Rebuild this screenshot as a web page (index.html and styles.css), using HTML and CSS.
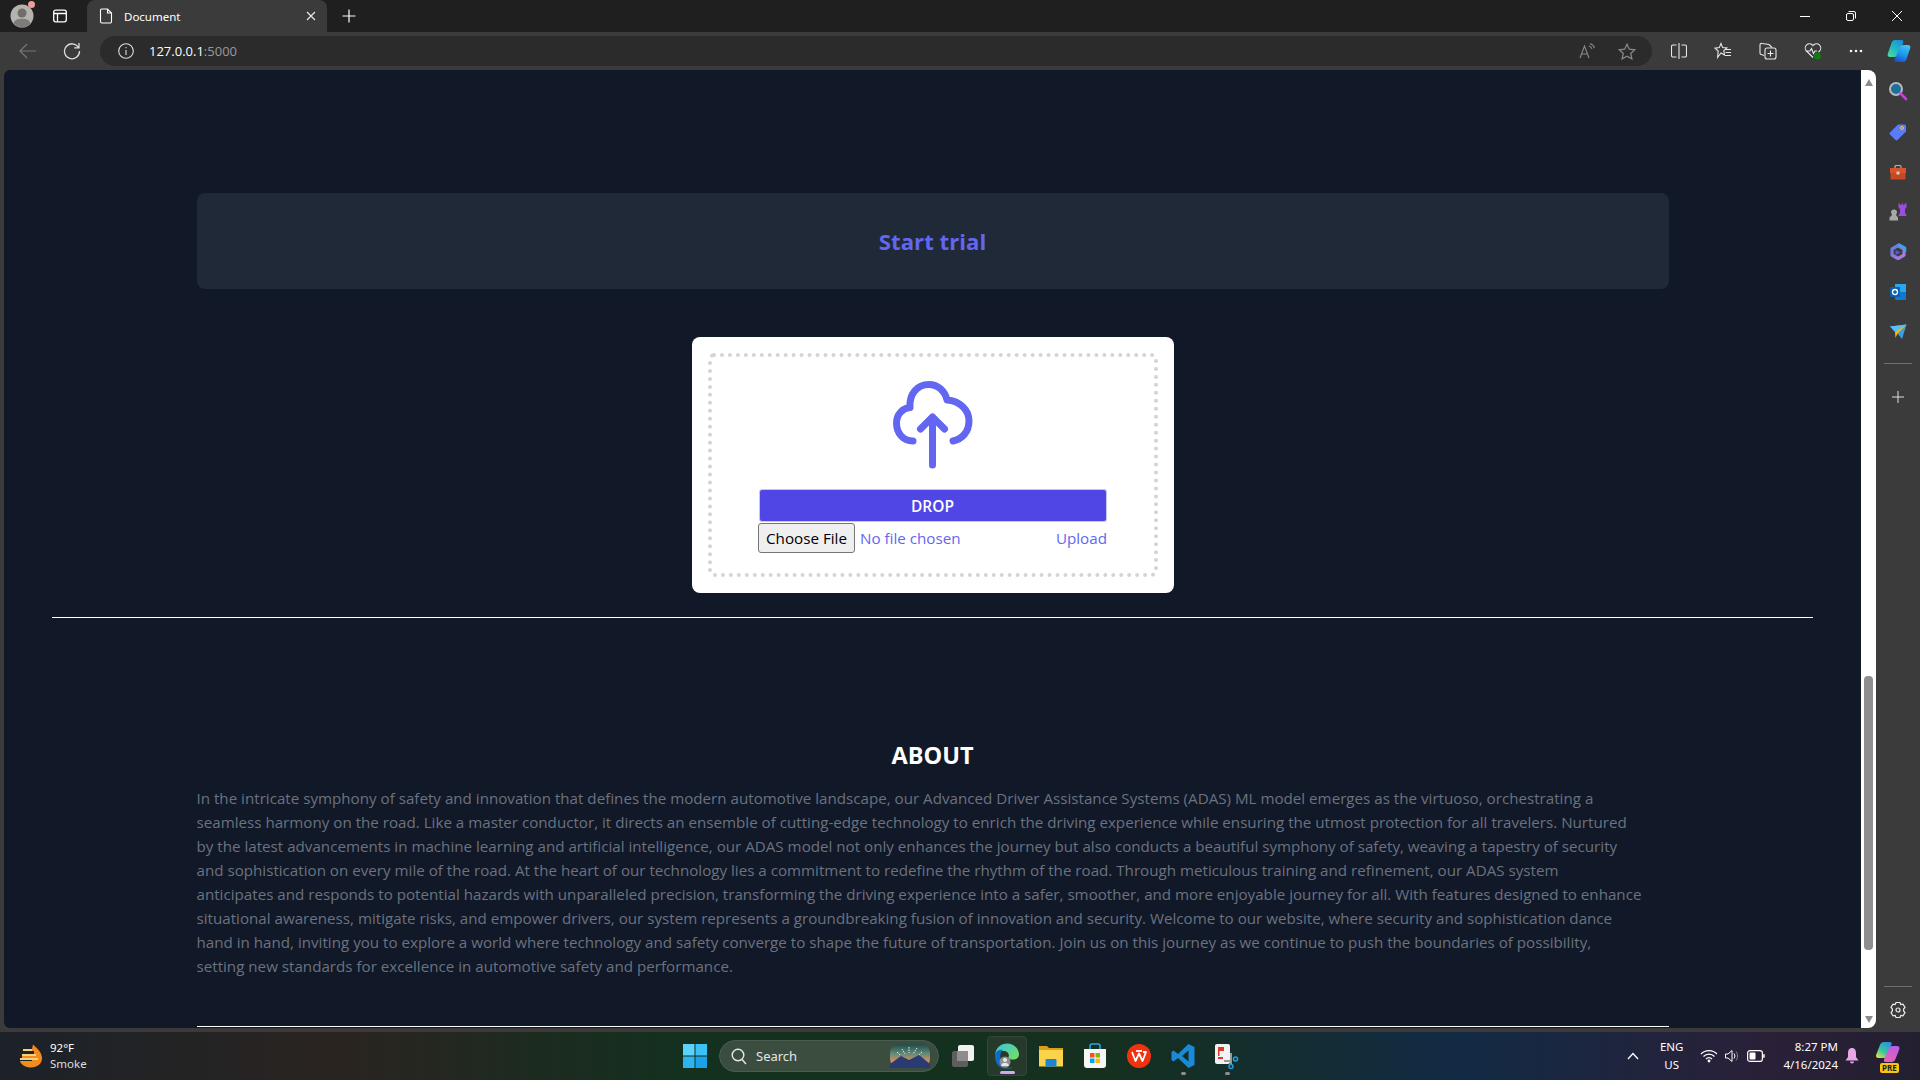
FILE: index.html
```html
<!DOCTYPE html>
<html lang="en">
<head>
    <meta charset="UTF-8">
    <meta name="viewport" content="width=device-width, initial-scale=1.0">
    <title>Document</title>
    <link rel="stylesheet" href="styles.css">
</head>
<body>
    <!-- tab strip -->
    <div class="tabstrip">
        <div class="avatar">
            <svg width="24" height="24" viewBox="0 0 24 24"><circle cx="12" cy="12" r="11.5" fill="#b5b3ae"/><circle cx="12" cy="9" r="4.5" fill="#6f6e6b"/><path d="M3.5 19.5C5 15.5 8 14.8 12 14.8s7 .7 8.500 4.700A11.500 11.500 0 0 1 3.500 19.500z" fill="#7d7c79"/></svg>
            <span class="avatar-dot"></span>
        </div>
        <svg class="workspaces" width="16" height="16" viewBox="0 0 16 16" fill="none" stroke="#fff" stroke-width="1.300"><rect x="1.700" y="2.200" width="12.600" height="11.600" rx="2"/><path d="M5.500 5.500V13.500M2 5.500H14"/></svg>
        <div class="tab">
            <svg width="14" height="16" viewBox="0 0 14 16" fill="none" stroke="#fff" stroke-width="1.100"><path d="M2.500 1H8.500L12.500 5V13.500A1.500 1.500 0 0 1 11 15H3A1.500 1.500 0 0 1 1.500 13.500V2A1 1 0 0 1 2.500 1zM8.500 1V5H12.500"/></svg>
            <span class="tab-title">Document</span>
            <svg class="tab-close" width="10" height="10" viewBox="0 0 10 10" stroke="#e6e6e6" stroke-width="1.200"><path d="M1 1L9 9M9 1L1 9"/></svg>
        </div>
        <svg class="newtab" width="14" height="14" viewBox="0 0 14 14" stroke="#fff" stroke-width="1.200"><path d="M7 0.500V13.500M0.500 7H13.500"/></svg>
        <div class="winctl">
            <svg width="10" height="10" viewBox="0 0 10 10" stroke="#fff" stroke-width="1"><path d="M0 5.500H10"/></svg>
            <svg width="10" height="10" viewBox="0 0 10 10" fill="none" stroke="#fff" stroke-width="1"><rect x="0.500" y="2.500" width="7" height="7" rx="1.500"/><path d="M2.500 0.500H8A1.500 1.500 0 0 1 9.500 2V7.500"/></svg>
            <svg width="10" height="10" viewBox="0 0 10 10" stroke="#fff" stroke-width="1"><path d="M0 0L10 10M10 0L0 10"/></svg>
        </div>
    </div>

    <!-- toolbar -->
    <div class="toolbar">
        <svg class="tool-back" width="18" height="16" viewBox="0 0 18 16" fill="none" stroke="#777" stroke-width="1.200"><path d="M17 8H1M8 1L1 8L8 15"/></svg>
        <svg class="tool-reload" width="18" height="18" viewBox="0 0 18 18" fill="none" stroke="#ddd" stroke-width="1.300"><path d="M15.500 5.500A7.500 7.500 0 1 0 16.500 9M16 1V5.800H11.200"/></svg>
        <div class="address">
            <svg width="16" height="16" viewBox="0 0 16 16" fill="none" stroke="#ddd" stroke-width="1.100"><circle cx="8" cy="8" r="7.300"/><path d="M8 7V12M8 4V5.300"/></svg>
            <span class="url">127.0.0.1<span class="url-port">:5000</span></span>
            <svg class="addr-read" width="16" height="16" viewBox="0 0 16 16" fill="none" stroke="#8a8a8a" stroke-width="1.100"><path d="M1 15L5.500 3L10 15M2.500 11H8.500M10 3A4 4 0 0 1 13 6M11 .8A6 6 0 0 1 15.500 5"/></svg>
            <svg width="18" height="17" viewBox="0 0 18 17" fill="none" stroke="#8a8a8a" stroke-width="1.200"><path d="M9 1.200L11.300 6.200L16.800 6.800L12.700 10.500L13.900 15.900L9 13.200L4.100 15.900L5.300 10.500L1.200 6.800L6.700 6.200z"/></svg>
        </div>
        <div class="tool-group">
            <svg width="16" height="16" viewBox="0 0 16 16" fill="none" stroke="#e8e8e8" stroke-width="1.100"><path d="M5.500 2H2A1.500 1.500 0 0 0 .5 3.500V12.500A1.500 1.500 0 0 0 2 14H5.500M10.500 2H14A1.500 1.500 0 0 1 15.500 3.500V12.500A1.500 1.500 0 0 1 14 14H10.500M8 0V16"/></svg>
            <svg width="18" height="18" viewBox="0 0 18 18" fill="none" stroke="#e8e8e8" stroke-width="1.100"><path d="M7 1.500L8.700 5.600L12.800 6L9.800 8.800L10.500 13L7 11L3.600 15.500L4.200 9L1 6.200L5.300 5.600zM12 7.500H17M11.500 10.500H17M11 13.500H17"/></svg>
            <svg width="18" height="18" viewBox="0 0 18 18" fill="none" stroke="#e8e8e8" stroke-width="1.100"><path d="M5 13.500L2.500 12.500A1.500 1.500 0 0 1 1 11V3A1.500 1.500 0 0 1 3 1.500L10 2.500L13 5.500"/><rect x="6" y="6" width="11" height="11" rx="2"/><path d="M11.500 8.500V14.500M8.500 11.500H14.500"/></svg>
            <svg width="18" height="18" viewBox="0 0 18 18" fill="none"><path d="M9 15.500L2.500 9A4.200 4.200 0 0 1 8.400 3L9 3.700L9.600 3A4.200 4.200 0 0 1 15.500 9L14.500 10M1.500 9H6L7.500 6.500L9.500 11.500L11 9H13" stroke="#e8e8e8" stroke-width="1.100"/><circle cx="13.500" cy="14" r="3.500" fill="#107c10"/></svg>
            <svg width="14" height="4" viewBox="0 0 14 4" fill="#f0f0f0"><circle cx="2" cy="2" r="1.300"/><circle cx="7" cy="2" r="1.300"/><circle cx="12" cy="2" r="1.300"/></svg>
            <svg class="tool-copilot" width="24" height="24" viewBox="0 0 24 24"><defs><linearGradient id="cp1" x1="0.800" y1="0" x2="0.100" y2="1"><stop offset="0" stop-color="#1a8fd8"/><stop offset="0.500" stop-color="#1fb8c4"/><stop offset="1" stop-color="#4fdc9a"/></linearGradient><linearGradient id="cp2" x1="0.700" y1="0" x2="0.300" y2="1"><stop offset="0" stop-color="#3fc4f4"/><stop offset="0.600" stop-color="#1e8fe8"/><stop offset="1" stop-color="#1c4fd0"/></linearGradient></defs><path d="M8 1H14.500C16 1 16.800 2.200 16.300 3.500L11.500 15C10.800 16.800 9.500 18 7.500 18H3C1 18 .2 16.500 .8 14.800L4.500 4C5.200 2 6.200 1 8 1z" fill="url(#cp1)"/><path d="M16.500 6H21C23 6 23.800 7.500 23.200 9.200L19.500 20C18.800 22 17.800 23 16 23H9.500C8 23 7.200 21.800 7.700 20.500L12.500 9C13.200 7.200 14.500 6 16.500 6z" fill="url(#cp2)"/></svg>
        </div>
    </div>

    <!-- page + scrollbar + sidebar -->
    <div class="browser">
        <div class="viewport">
            <main class="page">
                <div class="trial"><h2>Start trial</h2></div>
                <form class="card">
                    <div class="dropzone">
                        <svg class="cloud" width="80" height="88" viewBox="0 0 80 88" fill="none" stroke="#6366f1" stroke-width="7" stroke-linecap="round" stroke-linejoin="round"><path d="M20 60C10 60 3.500 52 3.500 42C3.500 33 10 27 17 26.500C16 13 24 3.500 36 3.500C45 3.500 52 10 54 19C67 20 76 29 76 40C76 51 69 58 60 60"/><path d="M39.500 84V36M27.500 48L39.500 36L51.500 48"/></svg>
                        <button type="button" class="drop">DROP</button>
                        <div class="file-row">
                            <input type="file" class="file">
                            <a class="upload">Upload</a>
                        </div>
                    </div>
                </form>
                <hr class="rule">
                <section class="about">
                    <h2>ABOUT</h2>
                    <p>In the intricate symphony of safety and innovation that defines the modern automotive landscape, our Advanced Driver Assistance Systems (ADAS) ML model emerges as the virtuoso, orchestrating a<br>seamless harmony on the road. Like a master conductor, it directs an ensemble of cutting-edge technology to enrich the driving experience while ensuring the utmost protection for all travelers. Nurtured<br>by the latest advancements in machine learning and artificial intelligence, our ADAS model not only enhances the journey but also conducts a beautiful symphony of safety, weaving a tapestry of security<br>and sophistication on every mile of the road. At the heart of our technology lies a commitment to redefine the rhythm of the road. Through meticulous training and refinement, our ADAS system<br>anticipates and responds to potential hazards with unparalleled precision, transforming the driving experience into a safer, smoother, and more enjoyable journey for all. With features designed to enhance<br>situational awareness, mitigate risks, and empower drivers, our system represents a groundbreaking fusion of innovation and security. Welcome to our website, where security and sophistication dance<br>hand in hand, inviting you to explore a world where technology and safety converge to shape the future of transportation. Join us on this journey as we continue to push the boundaries of possibility,<br>setting new standards for excellence in automotive safety and performance.</p>
                </section>
                <hr class="rule-short">
            </main>
        </div>
        <div class="scrollbar">
            <span class="arrow-up"></span>
            <span class="thumb"></span>
            <span class="arrow-down"></span>
        </div>
        <aside class="sidebar">
            <div class="side-item"><svg width="20" height="20" viewBox="0 0 20 20" fill="none"><circle cx="8" cy="8" r="6" fill="#1f6f9c" stroke="#b8b8b8" stroke-width="2"/><path d="M12.500 12.500L18 18" stroke="#c43fe0" stroke-width="2.600" stroke-linecap="round"/></svg></div>
            <div class="side-item"><svg width="18" height="18" viewBox="0 0 18 18"><path d="M9 1.500H15.500A1.500 1.500 0 0 1 17 3V8.500L8.500 17A1.500 1.500 0 0 1 6.500 17L1 11.500A1.500 1.500 0 0 1 1 9.500z" fill="#5b7cf7"/><circle cx="13" cy="5" r="1.500" fill="none" stroke="#ffc83d" stroke-width="1"/></svg></div>
            <div class="side-item"><svg width="18" height="16" viewBox="0 0 18 16"><path d="M6 4V2.500A1 1 0 0 1 7 1.500H11A1 1 0 0 1 12 2.500V4" fill="none" stroke="#b5b5b5" stroke-width="1.200"/><path d="M1 4H17V9H1z" fill="#d9532b"/><path d="M1.500 9H16.500V14.500A1 1 0 0 1 15.500 15.500H2.500A1 1 0 0 1 1.500 14.500z" fill="#c44a22"/><rect x="7.500" y="7.500" width="3" height="3" rx=".5" fill="#d0d0d0"/></svg></div>
            <div class="side-item"><svg width="20" height="20" viewBox="0 0 20 20"><path d="M3 10.500A3 3 0 1 1 9 10.500L8 13L10 15.500V18.500H1.500V15.500L4 13z" fill="#a8a8a8"/><path d="M10.500 1.500H12V3H13.500V1.500H15V3H16.500V1.500H18.500V5.500L17 7V11L18.500 13V14H10.500V13L12 11V7L10.500 5.500z" fill="#9b4de0"/></svg></div>
            <div class="side-item"><svg width="18" height="18" viewBox="0 0 18 18" fill="none"><defs><linearGradient id="m1" x1="0" y1="0" x2="1" y2="1"><stop offset="0" stop-color="#5b7de8"/><stop offset="1" stop-color="#b57cdc"/></linearGradient></defs><path d="M9 2.500L15 6V12L9 15.500L3 12V6z" stroke="url(#m1)" stroke-width="3.200" stroke-linejoin="round"/><path d="M9 1L16 5V9" stroke="#3ba4e8" stroke-width="2.600" stroke-linejoin="round"/><path d="M6.500 7L11.500 9.500L6.500 12z" fill="#5a5ad0"/></svg></div>
            <div class="side-item"><svg width="18" height="18" viewBox="0 0 18 18"><rect x="6" y="1" width="11" height="9" fill="#28a8ea"/><path d="M6 9H17V16A1 1 0 0 1 16 17H7A1 1 0 0 1 6 16z" fill="#0f78d4"/><rect x="1" y="4" width="10" height="10" rx="1" fill="#0a5fb0"/><circle cx="6" cy="9" r="2.500" fill="none" stroke="#fff" stroke-width="1.300"/></svg></div>
            <div class="side-item"><svg width="18" height="16" viewBox="0 0 18 16"><path d="M1 2.500L17.500 .5L13 15L9 10z" fill="#3b9fe8"/><path d="M1 2.500L17.500 .5L6 8z" fill="#56c1f5"/><path d="M17.500 .5L6 8L6.500 14L8.500 9.500z" fill="#ffb900"/></svg></div>
            <span class="side-line"></span>
            <div class="side-item"><svg width="12" height="12" viewBox="0 0 12 12" stroke="#e0e0e0" stroke-width="1"><path d="M6 0V12M0 6H12"/></svg></div>
            <span class="side-line side-bottom"></span>
            <div class="side-item side-gear"><svg width="16" height="18" viewBox="0 0 16 18" fill="none" stroke="#ececec" stroke-width="1.200"><path d="M6 1.500H10L10.800 3.500L13 3.200L15 6.500L13.600 8V10L15 11.500L13 14.800L10.800 14.500L10 16.500H6L5.200 14.500L3 14.800L1 11.500L2.400 10V8L1 6.500L3 3.200L5.200 3.500z"/><circle cx="8" cy="9" r="2"/></svg></div>
        </aside>
    </div>
    <div class="browser-foot"></div>

    <!-- windows taskbar -->
    <footer class="taskbar">
        <div class="weather">
            <svg width="26" height="24" viewBox="0 0 26 24"><path d="M15 .5C20 5 24 9 24 14C24 20 19 23.500 13 23.500C8 23.500 3 21 2 17H14V14H4V10H16V7H7V5H14z" fill="#f28c1e"/><path d="M5 5H14V7H5zM4 10H18V12H4zM2 14H20V16H2z" fill="#f4d27a"/></svg>
            <div class="weather-text"><span class="temp">92°F</span><span class="cond">Smoke</span></div>
        </div>
        <div class="task-center">
            <svg class="winlogo" width="24" height="24" viewBox="0 0 24 24"><rect width="11.500" height="11.500" fill="#5bd3fb"/><rect x="12.500" width="11.500" height="11.500" fill="#3cc0f5"/><rect y="12.500" width="11.500" height="11.500" fill="#2cb3f0"/><rect x="12.500" y="12.500" width="11.500" height="11.500" fill="#1ba1e8"/></svg>
            <div class="search">
                <svg width="16" height="17" viewBox="0 0 16 17" fill="none" stroke="#e8e8e8" stroke-width="1.400"><circle cx="7" cy="7" r="5.800"/><path d="M11 11.500L15 16"/></svg>
                <span>Search</span>
                <svg class="search-art" width="40" height="24" viewBox="0 0 40 24"><defs><linearGradient id="sk" x1="0" y1="0" x2="0" y2="1"><stop offset="0" stop-color="#1e4a48"/><stop offset="0.400" stop-color="#5f8a7c"/><stop offset="0.700" stop-color="#d08f5e"/></linearGradient></defs><rect width="40" height="24" rx="9" fill="url(#sk)"/><path d="M0 24V20L11 12L19 16L29 11L40 20V24z" fill="#2a3a72"/><path d="M19 3V9M12 5L15 10M27 4L23 10M7 8L10 11M32 8L29 11" stroke="#f4ecd8" stroke-width="1" stroke-dasharray="1.500 1"/></svg>
            </div>
            <div class="task-icon"><svg width="24" height="24" viewBox="0 0 24 24"><rect x="1" y="7" width="16" height="16" rx="2" fill="#5e5e5e"/><rect x="7" y="1" width="16" height="16" rx="2" fill="#f2f2f2"/><rect x="6" y="7" width="11" height="10" fill="#8d8d8d"/></svg></div>
            <div class="task-icon task-active"><svg width="26" height="26" viewBox="0 0 26 26"><defs><linearGradient id="eg" x1="0" y1="0" x2="1" y2="1"><stop offset="0" stop-color="#36c6e0"/><stop offset="1" stop-color="#7ddf5a"/></linearGradient></defs><path d="M1 13C1 5 7 .5 13.500 .5C20 .5 25 6 25 11.500C25 15 22 16.500 19 16.500C16 16.500 14 15.500 14.500 14C16 11 13 8 10 8C5 8 1 10 1 13z" fill="url(#eg)"/><path d="M1 13C1 8 5 6 9 7C5 10 6 17 9 21C11 24 15 25.500 19 24.500C16 26 13.500 25.500 11 25.500C5 25.500 1 20 1 13z" fill="#0f6cc4"/><circle cx="11" cy="19" r="5.500" fill="#8f8f8f"/><circle cx="11" cy="17" r="2" fill="#e8e8e8"/><path d="M7 23C7.500 20.500 9 20 11 20S14.500 20.500 15 23z" fill="#e8e8e8"/></svg><span class="active-bar"></span></div>
            <div class="task-icon"><svg width="24" height="24" viewBox="0 0 24 24"><path d="M0 2H8L10 4H24V8H0z" fill="#d6a01d"/><path d="M0 6H24V22.500H0z" fill="#fbd34b"/><rect x="6.500" y="15" width="11" height="7.500" rx="1" fill="#1b86d8"/></svg></div>
            <div class="task-icon"><svg width="24" height="26" viewBox="0 0 24 26"><path d="M7 7V3A2 2 0 0 1 9 1H15A2 2 0 0 1 17 3V7" fill="none" stroke="#28a8ea" stroke-width="1.500"/><path d="M1 6H23V22A3 3 0 0 1 20 25H4A3 3 0 0 1 1 22z" fill="#f6f6f6"/><rect x="7" y="10" width="4.500" height="4.500" fill="#f25022"/><rect x="12.500" y="10" width="4.500" height="4.500" fill="#7fba00"/><rect x="7" y="15.500" width="4.500" height="4.500" fill="#00a4ef"/><rect x="12.500" y="15.500" width="4.500" height="4.500" fill="#ffb900"/></svg></div>
            <div class="task-icon"><svg width="24" height="24" viewBox="0 0 24 24" fill="none"><circle cx="12" cy="12" r="12" fill="#f0330f"/><path d="M5 8L8.500 17L12 9.500L15.500 17L19 8H16" stroke="#fff" stroke-width="1.800" stroke-linejoin="round"/><path d="M9 7H15" stroke="#fff" stroke-width="1.800"/></svg></div>
            <div class="task-icon"><svg width="24" height="24" viewBox="0 0 24 24"><path d="M17.500 0L23.500 3V21L17.500 24L7 14L2.500 17.500L.5 16V8L2.500 6.500L7 10zM17.500 6.500L11 12L17.500 17.500z" fill="#1b8ad6"/></svg><span class="open-dot"></span></div>
            <div class="task-icon"><svg width="26" height="26" viewBox="0 0 26 26" fill="none"><rect x="1" y="1" width="15" height="20" rx="2" fill="#f2f2f2"/><path d="M4 4H10V8H5.500V13H4z" fill="#d93a2b"/><rect x="4" y="14" width="5" height="2" fill="#d93a2b"/><path d="M10 18H18" stroke="#9a9a9a" stroke-width="2"/><path d="M17 10L17 21" stroke="#9a9a9a" stroke-width="2"/><circle cx="21.500" cy="16" r="2" stroke="#1ba1e8" stroke-width="1.500"/><circle cx="17" cy="23.500" r="2" stroke="#1ba1e8" stroke-width="1.500"/></svg><span class="open-dot"></span></div>
        </div>
        <div class="tray">
            <svg class="tray-chev" width="12" height="8" viewBox="0 0 12 8" fill="none" stroke="#fff" stroke-width="1.300"><path d="M1 7L6 1.500L11 7"/></svg>
            <div class="lang"><span>ENG</span><span>US</span></div>
            <svg class="tray-wifi" width="18" height="14" viewBox="0 0 18 14" fill="none" stroke="#fff" stroke-width="1.200"><path d="M1 5A11 11 0 0 1 17 5M3.500 7.500A7.500 7.500 0 0 1 14.500 7.500M6 10A4 4 0 0 1 12 10"/><circle cx="9" cy="12" r=".8" fill="#fff"/></svg>
            <svg class="tray-vol" width="16" height="16" viewBox="0 0 16 16" fill="none" stroke="#fff" stroke-width="1"><path d="M1.500 6H4L8 2.500V13.500L4 10H1.500z"/><path d="M10 5.500A4 4 0 0 1 10 10.500" /><path d="M12 3.500A7 7 0 0 1 12 12.500" stroke="#888"/></svg>
            <svg class="tray-batt" width="18" height="12" viewBox="0 0 18 12" fill="none"><rect x=".6" y=".6" width="14.800" height="10.800" rx="2.500" stroke="#fff" stroke-width="1.200"/><rect x="2.500" y="2.500" width="6" height="7" rx="1" fill="#fff"/><rect x="16.200" y="4" width="1.500" height="4" rx=".7" fill="#fff"/></svg>
            <div class="clock"><span>8:27 PM</span><span>4/16/2024</span></div>
            <svg class="tray-bell" width="14" height="16" viewBox="0 0 14 16"><path d="M7 0C10 0 11 2.500 11 5V9L13.500 12.500H.5L3 9V5C3 2.500 4 0 7 0z" fill="#e7a6e6"/><path d="M5 13.500H9A2 2 0 0 1 5 13.500z" fill="#e7a6e6"/></svg>
            <div class="tray-copilot">
                <svg width="26" height="22" viewBox="0 0 26 22"><defs><linearGradient id="cq1" x1="0.800" y1="0" x2="0.100" y2="1"><stop offset="0" stop-color="#2a8fe0"/><stop offset="0.550" stop-color="#35c8a0"/><stop offset="1" stop-color="#e8e04a"/></linearGradient><linearGradient id="cq2" x1="0.700" y1="0" x2="0.300" y2="1"><stop offset="0" stop-color="#b65fe8"/><stop offset="1" stop-color="#e860b0"/></linearGradient></defs><path d="M9 1H15C16.500 1 17 2 16.500 3.500L12 15C11.300 16.500 10 17 8.500 17H3.500C1.500 17 .5 15.500 1.200 13.800L5 4C5.700 2 7 1 9 1z" fill="url(#cq1)"/><path d="M17.500 5H22C24 5 25 6.500 24.300 8.200L20.500 18C19.800 20 18.500 21 17 21H10.500C9 21 8.500 20 9 18.500L13.500 8C14.200 6 15.500 5 17.500 5z" fill="url(#cq2)"/></svg>
                <span class="pre">PRE</span>
            </div>
        </div>
    </footer>
</body>
</html>
```

FILE: styles.css
```css
* {
    box-sizing: border-box;
}

body {
    margin: 0;
    height: 1080px;
    overflow: hidden;
    display: flex;
    flex-direction: column;
    background-color: #3b3b3b;
    font-family: "Open Sans", "Noto Sans", Arial, sans-serif;
}

svg {
    display: block;
    flex-shrink: 0;
}

/* tab strip */
.tabstrip {
    height: 32px;
    background-color: #1f1f1f;
    display: flex;
    align-items: center;
    color: #fff;
}
.avatar {
    position: relative;
    margin-left: 10px;
    width: 24px;
    height: 24px;
}
.avatar-dot {
    position: absolute;
    top: -3px;
    right: -1px;
    width: 7px;
    height: 7px;
    border-radius: 50%;
    background-color: #f49a98;
}
.workspaces {
    margin-left: 18px;
}
.tab {
    margin-left: 19px;
    width: 240px;
    height: 32px;
    background-color: #3b3b3b;
    border-radius: 8px 8px 0 0;
    display: flex;
    align-items: center;
    padding: 0 11px 0 12px;
}
.tab-title {
    margin-left: 11px;
    font-size: 11.5px;
    font-family: "Noto Sans", Arial, sans-serif;
    flex: 1;
}
.newtab {
    margin-left: 15px;
}
.winctl {
    margin-left: auto;
    display: flex;
    gap: 36px;
    padding-right: 18px;
}

/* toolbar */
.toolbar {
    height: 38px;
    display: flex;
    align-items: center;
}
.tool-back {
    margin-left: 19px;
}
.tool-reload {
    margin-left: 26px;
}
.address {
    margin-left: 19px;
    width: 1552px;
    height: 30px;
    background-color: #2b2b2b;
    border-radius: 15px;
    display: flex;
    align-items: center;
    padding: 0 16px 0 18px;
}
.url {
    margin-left: 15px;
    font-size: 13px;
    color: #fff;
    flex: 1;
}
.url-port {
    color: #9a9a9a;
}
.addr-read {
    margin-right: 23px;
}
.tool-group {
    flex: 1;
    display: flex;
    align-items: center;
    padding-left: 19px;
    gap: 27px;
}
.tool-copilot {
    margin-left: -3px;
}

/* content */
.browser {
    height: 958px;
    display: flex;
    padding-left: 4px;
}
.viewport {
    width: 1857px;
    background-color: #111827;
    border-radius: 6px 0 0 6px;
    overflow: hidden;
}
.page {
    padding-top: 123px;
    display: flex;
    flex-direction: column;
    align-items: center;
}
.trial {
    width: 1472px;
    height: 96px;
    background-color: #1f2937;
    border-radius: 8px;
    display: flex;
    align-items: center;
    justify-content: center;
}
.trial h2 {
    margin: 0;
    font-size: 22.2px;
    font-weight: 700;
    color: #6366f1;
}
.card {
    margin-top: 48px;
    width: 482px;
    height: 256px;
    background-color: #fff;
    border-radius: 8px;
    padding: 16px;
}
.dropzone {
    height: 224px;
    border: 4px dotted #d1d5db;
    border-radius: 6px;
    display: flex;
    flex-direction: column;
    align-items: center;
    padding-top: 24px;
}
.drop {
    margin-top: 20px;
    width: 348px;
    height: 33px;
    border: 1px solid #c7c7e8;
    border-radius: 3px;
    background-color: #4f46e5;
    color: #fff;
    font-family: inherit;
    font-size: 15.5px;
    font-weight: 600;
}
.file-row {
    width: 349px;
    height: 32px;
    display: flex;
    align-items: center;
    font-size: 15.2px;
    color: #6366f1;
}
.file {
    flex: 1;
    min-width: 0;
    font-family: inherit;
    font-size: 15.2px;
    color: #6366f1;
}
.file::file-selector-button {
    height: 30px;
    width: 97px;
    padding: 0;
    margin-right: 5px;
    font-family: inherit;
    font-size: 15.2px;
    color: #000;
    background-color: #efefef;
    border: 1px solid #767676;
    border-radius: 3px;
}
.rule {
    margin: 24px 0 0;
    width: 1761px;
    height: 1px;
    border: 0;
    background-color: #fff;
    flex-shrink: 0;
}
.about {
    width: 1472px;
    margin-top: 122px;
}
.about h2 {
    margin: 0;
    text-align: center;
    font-size: 23.5px;
    font-weight: 700;
    line-height: 30px;
    color: #fff;
}
.about p {
    margin: 16px 0 0;
    font-size: 15.16px;
    line-height: 24px;
    color: #6b7280;
    white-space: nowrap;
}
.rule-short {
    margin: 48px 0 0;
    width: 1472px;
    height: 1px;
    border: 0;
    background-color: #fff;
}

/* page scrollbar */
.scrollbar {
    width: 15px;
    background-color: #fff;
    border-radius: 0 8px 8px 0;
    display: flex;
    flex-direction: column;
    align-items: center;
    position: relative;
}
.arrow-up {
    margin-top: 9px;
    border-left: 4.5px solid transparent;
    border-right: 4.5px solid transparent;
    border-bottom: 7px solid #8c8c8c;
}
.thumb {
    position: absolute;
    top: 606px;
    width: 9px;
    height: 274px;
    border-radius: 4px;
    background-color: #8f8f8f;
}
.arrow-down {
    margin-top: auto;
    margin-bottom: 5px;
    border-left: 4.5px solid transparent;
    border-right: 4.5px solid transparent;
    border-top: 7px solid #8c8c8c;
}

/* edge sidebar */
.sidebar {
    flex: 1;
    display: flex;
    flex-direction: column;
    align-items: center;
}
.side-item {
    height: 40px;
    display: flex;
    align-items: center;
    justify-content: center;
    flex-shrink: 0;
}
.side-item:first-child {
    margin-top: 1px;
    margin-bottom: 1px;
}
.side-line {
    margin: 11px 0 13px;
    width: 28px;
    height: 1px;
    background-color: #6e6e6e;
}
.side-bottom {
    margin: auto 0 3px;
}
.side-gear {
    margin-bottom: -2px;
    height: 40px;
}
.browser-foot {
    height: 4px;
}

/* taskbar */
.taskbar {
    height: 48px;
    display: flex;
    align-items: center;
    color: #fff;
    background: linear-gradient(90deg, #1c2229 0, #2a2420 18%, #14301f 35%, #15301f 58%, #122a44 76%, #2a2038 92%, #241f30 100%);
}
.weather {
    width: 683px;
    padding-left: 18px;
    display: flex;
    align-items: center;
    gap: 6px;
}
.weather-text {
    display: flex;
    flex-direction: column;
    font-size: 11.5px;
    line-height: 16px;
    font-family: "Noto Sans", Arial, sans-serif;
}
.cond {
    color: #ddd;
}
.task-center {
    display: flex;
    align-items: center;
}
.search {
    margin-left: 12px;
    width: 220px;
    height: 32px;
    border-radius: 16px;
    background-color: #3a4d3f;
    border: 1px solid #4a5c4e;
    display: flex;
    align-items: center;
    padding: 0 8px 0 11px;
    font-size: 13px;
    color: #e6e6e6;
    font-family: "Noto Sans", Arial, sans-serif;
}
.search span {
    margin-left: 9px;
    flex: 1;
}
.task-icon {
    width: 40px;
    height: 40px;
    margin-right: 4px;
    border-radius: 4px;
    display: flex;
    align-items: center;
    justify-content: center;
    position: relative;
}
.search + .task-icon {
    margin-left: 4px;
}
.task-active {
    background-color: #263a2c;
    border: 1px solid #33463a;
}
.active-bar {
    position: absolute;
    bottom: 1px;
    left: 12px;
    width: 15px;
    height: 3px;
    border-radius: 2px;
    background-color: #d6a6e6;
}
.open-dot {
    position: absolute;
    bottom: 1px;
    left: 18px;
    width: 5px;
    height: 3px;
    border-radius: 2px;
    background-color: #8e8e8e;
}
.tray {
    margin-left: auto;
    display: flex;
    align-items: center;
    font-family: "Noto Sans", Arial, sans-serif;
}
.lang,
.clock {
    display: flex;
    flex-direction: column;
    font-size: 11.5px;
    line-height: 18px;
    text-align: center;
}
.lang {
    margin-left: 21px;
}
.tray-wifi {
    margin-left: 17px;
}
.tray-vol {
    margin-left: 6px;
}
.tray-batt {
    margin-left: 7px;
}
.clock {
    margin-left: 18px;
    text-align: right;
}
.tray-bell {
    margin-left: 7px;
}
.tray-copilot {
    margin: 0 19px 0 16px;
    position: relative;
    height: 30px;
}
.pre {
    position: absolute;
    left: 5px;
    bottom: -2px;
    padding: 0 2px;
    font-size: 8px;
    line-height: 10px;
    font-weight: 700;
    color: #1c1c1c;
    background-color: #f5c518;
    border-radius: 2px;
}
```
